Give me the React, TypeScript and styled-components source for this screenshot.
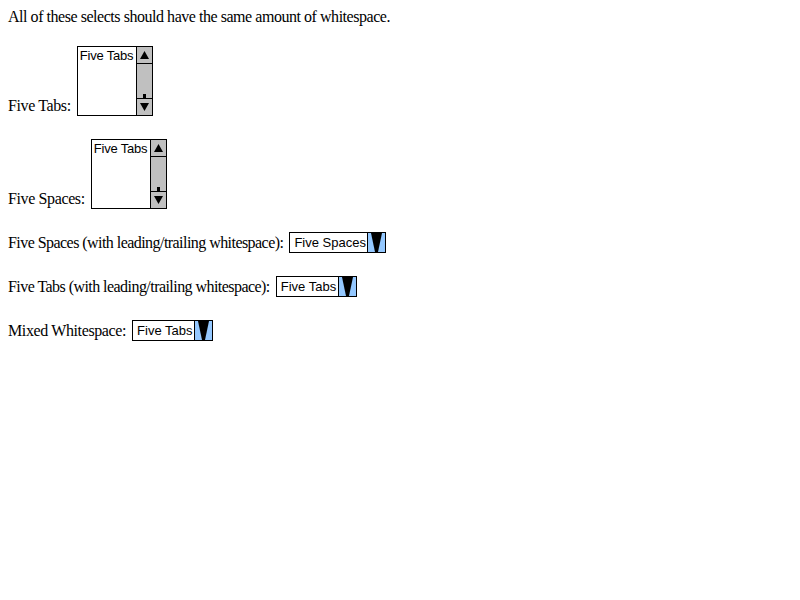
import React from "react";
import styled, { createGlobalStyle } from "styled-components";

const Global = createGlobalStyle`
  html, body { margin: 0; padding: 0; background: #fff; }
  body { padding: 8px; font-family: "Liberation Serif", "Times New Roman", serif; font-size: 16px; color: #000; }
`;

const Page = styled.div`
  display: flex;
  flex-direction: column;
  align-items: flex-start;
  gap: 23px;
`;

const Heading = styled.div`
  line-height: 18px;
  height: 18px;
  margin-bottom: -3px;
  letter-spacing: -0.46px;
  white-space: nowrap;
`;

const Row = styled.div`
  display: flex;
  align-items: flex-end;
  gap: 6px;
`;

const Label = styled.span<{ $tight?: boolean }>`
  line-height: 18px;
  padding-bottom: 1px;
  white-space: nowrap;
  letter-spacing: ${(p) => (p.$tight ? "-0.55px" : "-0.38px")};
`;

const ListBox = styled.div`
  box-sizing: border-box;
  width: 76px;
  height: 70px;
  border: 1px solid #000;
  background: #fff;
  display: flex;
`;

const ListOptions = styled.div`
  flex: 1;
  padding: 1px 0 0 2px;
  font-family: "Liberation Sans", Arial, sans-serif;
  font-size: 13px;
  line-height: 15px;
  letter-spacing: -0.2px;
  white-space: nowrap;
  overflow: hidden;
`;

const ScrollBar = styled.div`
  width: 15px;
  border-left: 1px solid #000;
  background: #c0c0c0;
  display: flex;
  flex-direction: column;
`;

const ScrollButton = styled.div<{ $bottom?: boolean }>`
  height: 16px;
  display: flex;
  align-items: center;
  justify-content: center;
  border-top: ${(p) => (p.$bottom ? "1px solid #000" : "none")};
  border-bottom: ${(p) => (p.$bottom ? "none" : "1px solid #000")};
`;

const Track = styled.div`
  flex: 1;
  position: relative;
`;

const Nub = styled.div`
  position: absolute;
  left: 6px;
  bottom: 0;
  width: 3px;
  height: 4px;
  background: #000;
`;

const Dropdown = styled.div<{ $w: number }>`
  box-sizing: border-box;
  width: ${(p) => p.$w}px;
  height: 21px;
  border: 1px solid #000;
  background: #fff;
  display: flex;
`;

const DropText = styled.div`
  flex: 1;
  padding-left: 4px;
  font-family: "Liberation Sans", Arial, sans-serif;
  font-size: 13px;
  line-height: 19px;
  white-space: nowrap;
  overflow: hidden;
`;

const DropButton = styled.div`
  width: 17px;
  border-left: 1px solid #000;
  background: #94c8ff;
  display: flex;
`;

const UpArrow = () => (
  <svg width="9" height="8" viewBox="0 0 9 8">
    <polygon points="4.5,0 9,8 0,8" fill="#000" />
  </svg>
);

const DownArrow = () => (
  <svg width="9" height="8" viewBox="0 0 9 8">
    <polygon points="0,0 9,0 4.5,8" fill="#000" />
  </svg>
);

const DropArrow = () => (
  <svg width="17" height="19" viewBox="0 0 17 19">
    <polygon points="3,0 14,0 10,19 7,19" fill="#000" />
  </svg>
);

const Listbox = ({ text }: { text: string }) => (
  <ListBox>
    <ListOptions>{text}</ListOptions>
    <ScrollBar>
      <ScrollButton>
        <UpArrow />
      </ScrollButton>
      <Track>
        <Nub />
      </Track>
      <ScrollButton $bottom>
        <DownArrow />
      </ScrollButton>
    </ScrollBar>
  </ListBox>
);

const Select = ({ text, width }: { text: string; width: number }) => (
  <Dropdown $w={width}>
    <DropText>{text}</DropText>
    <DropButton>
      <DropArrow />
    </DropButton>
  </Dropdown>
);

export default function App() {
  return (
    <>
      <Global />
      <Page>
        <Heading>All of these selects should have the same amount of whitespace.</Heading>
        <Row>
          <Label>Five Tabs:</Label>
          <Listbox text="Five Tabs" />
        </Row>
        <Row>
          <Label>Five Spaces:</Label>
          <Listbox text="Five Tabs" />
        </Row>
        <Row>
          <Label $tight>Five Spaces (with leading/trailing whitespace):</Label>
          <Select text="Five Spaces" width={97} />
        </Row>
        <Row>
          <Label $tight>Five Tabs (with leading/trailing whitespace):</Label>
          <Select text="Five Tabs" width={81} />
        </Row>
        <Row>
          <Label>Mixed Whitespace:</Label>
          <Select text="Five Tabs" width={81} />
        </Row>
      </Page>
    </>
  );
}
